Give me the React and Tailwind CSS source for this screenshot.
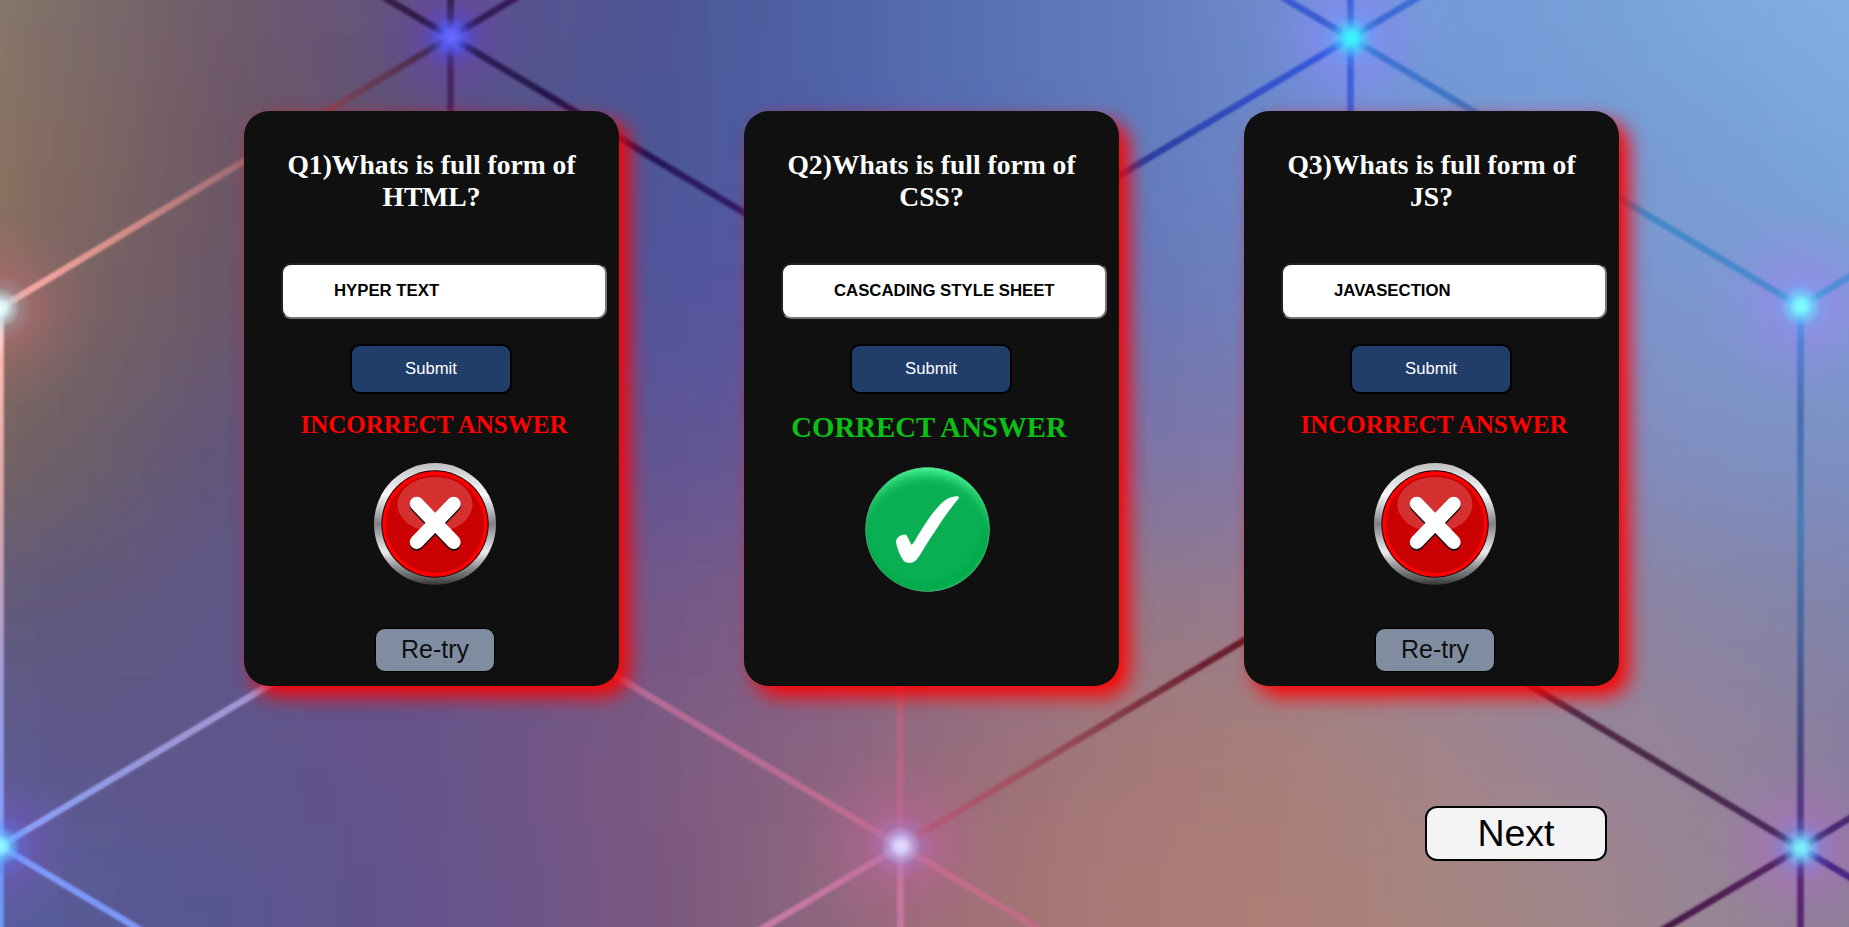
import React from "react";

const COLS = [-80, 70, 220, 370, 520, 670, 820, 970, 1120, 1270, 1420, 1570, 1720, 1870];
const ROWS = [
  ["#8d7f68", "#7d6c6c", "#6e5a6c", "#65527c", "#575390", "#4e5796", "#4f62a6", "#5770b4", "#607cbc", "#6e8ace", "#749cd8", "#779fd8", "#7ca9df", "#81afe5"],
  ["#937c5e", "#7e6862", "#6d5765", "#61506f", "#51538c", "#4e5698", "#5060a8", "#566eb2", "#607abc", "#6b88ca", "#7294d2", "#7699d4", "#799fd8", "#7ca7de"],
  ["#9a7260", "#7a6364", "#6a5768", "#605478", "#52559a", "#52559c", "#565ca4", "#5e6cb0", "#6876b6", "#7080bc", "#788cc6", "#7c93ca", "#7c98d0", "#7c9bd2"],
  ["#7c685c", "#6c5e66", "#61557a", "#605488", "#60538c", "#605494", "#685c98", "#7266a0", "#7a72a6", "#8078a8", "#8284b0", "#838ab8", "#7e90c2", "#7a90c6"],
  ["#645c78", "#60587c", "#5f5688", "#61548a", "#6c548a", "#755888", "#7c6088", "#88708e", "#917888", "#967c8e", "#8f8198", "#8e849e", "#8684a6", "#8084ac"],
  ["#5c5c94", "#5f588a", "#60558a", "#63528a", "#6e5486", "#7e5a80", "#8c6482", "#9a6e7c", "#a47878", "#a87e78", "#a48488", "#998496", "#92829a", "#867ca0"],
  ["#5860a2", "#585a96", "#585792", "#61538c", "#6d548a", "#7c587e", "#8e667e", "#a07074", "#aa7a76", "#ac7e76", "#a8857e", "#a0868a", "#968494", "#8a7c98"],
];

const LINES = [
  [450.5, 37, 0, -232, ["#2e1848", "#5c3856"]],
  [450.5, 37, 900, -232, ["#38205c", "#20103c"]],
  [450.5, 37, 450.5, -200, ["#3a2050", "#3a2050"]],
  [450.5, 37, 450.5, 577, ["#452560", "#5c2a5c"]],
  [450.5, 37, 0, 308, ["#3a2550", "#7a4456", "#a47078", "#d89088", "#ffb0ac"]],
  [450.5, 37, 900, 306, ["#302058", "#221548", "#30206c", "#302880"]],
  [1350.5, 38, 900, -232, ["#3a5cd4", "#3a50b4"]],
  [1350.5, 38, 1800, -232, ["#3b68d4", "#5090d0"]],
  [1350.5, 38, 1350.5, -200, ["#4462dc", "#4462c8"]],
  [1350.5, 38, 1350.5, 577, ["#4262e0", "#3848a0"]],
  [1350.5, 38, 900, 306, ["#3b60e8", "#283a98", "#282478"]],
  [1350.5, 38, 1800, 306, ["#4072d8", "#4178be", "#4288c8", "#5088d4"]],
  [1800.5, 306, 2250, 37, ["#5090d8", "#4c80c0"]],
  [1800.5, 306, 1800.5, 848, ["#5a88f0", "#476eb0", "#477cb8", "#48649c", "#464880", "#5a3088"]],
  [0, 846, 450, 577, ["#88a0ff", "#9898d8", "#a898d4", "#c09cd4"]],
  [0, 846, 450, 1115, ["#7c98fc", "#7898e4"]],
  [900.5, 846, 450, 577, ["#c06c90", "#b46c94", "#b070a4"]],
  [900.5, 846, 900.5, 306, ["#bc6890", "#a8606c", "#bc4050"]],
  [900.5, 846, 1350, 577, ["#bc5c7c", "#985058", "#6c2430", "#501020"]],
  [900.5, 846, 450, 1115, ["#c0709c", "#d890bc"]],
  [900.5, 846, 900.5, 1115, ["#c4709c", "#cc88a8"]],
  [900.5, 846, 1350, 1115, ["#c46c90", "#b07068"]],
  [1800.5, 848, 1350, 577, ["#4c2c60", "#4a2c48", "#582c48", "#701828"]],
  [1800.5, 848, 2250, 577, ["#482870", "#5c3878"]],
  [1800.5, 848, 2250, 1115, ["#482888", "#402060"]],
  [1800.5, 848, 1350, 1115, ["#582468", "#401830", "#401428"]],
  [1800.5, 848, 1800.5, 1115, ["#582878", "#582860"]],
];

const NODES = [
  { x: 451, y: 37, core: "#6868ff", mid: "#4058ff", halo: "#6a3cb4", r: 85 },
  { x: 1351, y: 38, core: "#3cf8ff", mid: "#50b8ff", halo: "#8888ff", r: 105 },
  { x: 1801, y: 306, core: "#80ffff", mid: "#60b8ff", halo: "#9c84f0", r: 100 },
  { x: 0, y: 308, core: "#e8ffff", mid: "#98c0c8", halo: "#b86870", r: 95 },
  { x: 0, y: 846, core: "#90ffff", mid: "#4888ff", halo: "#7854c8", r: 85 },
  { x: 901, y: 846, core: "#e4dcff", mid: "#a08ce8", halo: "#c0609c", r: 100 },
  { x: 1801, y: 848, core: "#80f4ff", mid: "#5898ff", halo: "#b06cc8", r: 95 },
];

function Backdrop() {
  return (
    <svg
      className="absolute inset-0 h-full w-full"
      viewBox="0 0 1849 927"
      preserveAspectRatio="xMidYMid slice"
      aria-hidden="true"
    >
      <defs>
        <filter id="soften" filterUnits="userSpaceOnUse" x="-300" y="-300" width="2500" height="1600">
          <feGaussianBlur stdDeviation="58" />
        </filter>
        <filter id="lineSoften" filterUnits="userSpaceOnUse" x="-50" y="-50" width="1950" height="1030">
          <feGaussianBlur stdDeviation="0.8" />
        </filter>
        {LINES.map(([x1, y1, x2, y2, stops], i) => (
          <linearGradient key={i} id={`line${i}`} gradientUnits="userSpaceOnUse" x1={x1} y1={y1} x2={x2} y2={y2}>
            {stops.map((c, j) => (
              <stop key={j} offset={j / (stops.length - 1)} stopColor={c} />
            ))}
          </linearGradient>
        ))}
        {NODES.map((n, i) => (
          <React.Fragment key={i}>
            <radialGradient id={`halo${i}`}>
              <stop offset="0" stopColor={n.halo} stopOpacity="0.75" />
              <stop offset="0.3" stopColor={n.halo} stopOpacity="0.5" />
              <stop offset="0.65" stopColor={n.halo} stopOpacity="0.16" />
              <stop offset="1" stopColor={n.halo} stopOpacity="0" />
            </radialGradient>
            <radialGradient id={`glow${i}`}>
              <stop offset="0" stopColor={n.mid} stopOpacity="0.9" />
              <stop offset="0.3" stopColor={n.mid} stopOpacity="0.65" />
              <stop offset="0.6" stopColor={n.mid} stopOpacity="0.25" />
              <stop offset="1" stopColor={n.mid} stopOpacity="0" />
            </radialGradient>
            <radialGradient id={`core${i}`}>
              <stop offset="0" stopColor={n.core} />
              <stop offset="0.3" stopColor={n.core} stopOpacity="0.8" />
              <stop offset="0.6" stopColor={n.core} stopOpacity="0.32" />
              <stop offset="1" stopColor={n.core} stopOpacity="0" />
            </radialGradient>
          </React.Fragment>
        ))}
        <linearGradient id="edge" gradientUnits="userSpaceOnUse" x1="0" y1="308" x2="0" y2="846">
          <stop offset="0" stopColor="#fff0f0" />
          <stop offset="0.1" stopColor="#ffb8b0" />
          <stop offset="0.35" stopColor="#dca8a4" />
          <stop offset="0.7" stopColor="#a09cdc" />
          <stop offset="1" stopColor="#80a0ff" />
        </linearGradient>
      </defs>
      <g filter="url(#soften)">
        {ROWS.map((row, r) =>
          row.map((c, i) => {
            const top = r === 0 ? -230 : -75 + r * 150;
            const left = i === 0 ? -230 : COLS[i] - 70;
            return (
              <rect
                key={`${r}-${i}`}
                x={left}
                y={top}
                width={i === 0 ? 232 : i === row.length - 1 ? 300 : 152}
                height={r === 0 ? 307 : r === ROWS.length - 1 ? 350 : 152}
                fill={c}
              />
            );
          })
        )}
      </g>
      {NODES.map((n, i) => (
        <circle key={i} cx={n.x} cy={n.y} r={n.r} fill={`url(#halo${i})`} />
      ))}
      <g filter="url(#lineSoften)">
        {LINES.map(([x1, y1, x2, y2], i) => (
          <path key={i} d={`M${x1} ${y1}L${x2} ${y2}`} stroke={`url(#line${i})`} strokeWidth="6.6" />
        ))}
        <path d="M0.5 308V846" stroke="url(#edge)" strokeWidth="6.6" />
        <path d="M0.5 846V940" stroke="#6c98f4" strokeWidth="6.6" />
      </g>
      {NODES.map((n, i) => (
        <g key={i}>
          <circle cx={n.x} cy={n.y} r="34" fill={`url(#glow${i})`} />
          <circle cx={n.x} cy={n.y} r="20" fill={`url(#core${i})`} />
        </g>
      ))}
    </svg>
  );
}

function WrongIcon({ id }) {
  return (
    <svg className="h-[122px] w-[122px]" viewBox="0 0 122 122" aria-hidden="true">
      <defs>
        <linearGradient id={id} x1="0" y1="0" x2="0" y2="1">
          <stop offset="0" stopColor="#bcbcbe" />
          <stop offset="0.06" stopColor="#d0d0d2" />
          <stop offset="0.26" stopColor="#f8f8fa" />
          <stop offset="0.4" stopColor="#b4b4b8" />
          <stop offset="0.5" stopColor="#828286" />
          <stop offset="0.6" stopColor="#b0b0b4" />
          <stop offset="0.73" stopColor="#ececee" />
          <stop offset="0.85" stopColor="#929294" />
          <stop offset="0.95" stopColor="#585a5a" />
          <stop offset="1" stopColor="#333" />
        </linearGradient>
      </defs>
      <circle cx="61" cy="61" r="61" fill={`url(#${id})`} />
      <circle cx="61" cy="61" r="53.7" fill="#100000" />
      <circle cx="61" cy="61" r="52.7" fill="#ff0000" />
      <circle cx="61" cy="61" r="49" fill="#cb0000" />
      <ellipse cx="61" cy="41.5" rx="37.5" ry="27.5" fill="#d43030" />
      <g strokeWidth="14" strokeLinecap="round">
        <path d="M42.7 42.7L79.7 81M79.7 42.7L42.7 81" stroke="#1c1010" />
        <path d="M42.7 40.7L79.7 79M79.7 40.7L42.7 79" stroke="#fff" />
      </g>
    </svg>
  );
}

function RightIcon() {
  return (
    <svg className="h-[125px] w-[125px]" viewBox="0 0 125 125" aria-hidden="true">
      <defs>
        <radialGradient id="topLight" gradientUnits="userSpaceOnUse" cx="61" cy="80" r="80">
          <stop offset="0.74" stopColor="#0aaf54" stopOpacity="0" />
          <stop offset="0.86" stopColor="#22cc6c" stopOpacity="0.6" />
          <stop offset="1" stopColor="#4bff9c" />
        </radialGradient>
        <radialGradient id="bottomLight" gradientUnits="userSpaceOnUse" cx="58" cy="56" r="72">
          <stop offset="0.75" stopColor="#00aa48" stopOpacity="0" />
          <stop offset="0.92" stopColor="#00ac48" />
          <stop offset="1" stopColor="#24c46c" />
        </radialGradient>
      </defs>
      <circle cx="62.5" cy="62.5" r="62" fill="#0aaf54" />
      <circle cx="62.5" cy="62.5" r="62" fill="url(#bottomLight)" />
      <circle cx="62.5" cy="62.5" r="62" fill="url(#topLight)" stroke="#6c9c80" strokeWidth="0.6" />
      <path
        d="M31 74.5C31.5 70 36 67.5 40.5 67.4C43 69 44.5 75 46.7 77.7C48.5 77 52 69.5 56.5 62.7C62 53.5 69 44 75 37.7C81 31.3 87 29.2 93.2 29.2Q94.3 30.2 93.6 31.6C88 38.5 82 46 77 53.5C70 64.5 64 73 59.5 80.5C55.5 87 52.5 92.5 49.7 94.2C46.5 96.6 41 96.6 38.5 93.6C35 88.5 31.5 80 31 74.5Z"
        fill="#fff"
      />
    </svg>
  );
}

function QuestionCard({ number, topic, answer, correct }) {
  return (
    <section className="flex h-[575px] w-[375px] flex-col items-center rounded-[25px] bg-[#101010] pt-[38px] shadow-[10px_10px_20px_red]">
      <h2 className="w-[325px] text-center font-['Liberation_Serif',serif] text-[27.6px] leading-[32px] font-bold text-white">
        Q{number})Whats is full form of {topic}?
      </h2>
      <input
        className="mt-[50px] ml-[25px] h-14 w-[326px] shrink-0 rounded-[10px] border-2 border-t-[#222] border-r-[#767676] border-b-[#767676] border-l-[#222] bg-white pr-[40px] pl-[51px] text-[16.75px] font-bold text-black"
        defaultValue={answer}
        aria-label={`Answer ${number}`}
      />
      <button className="mt-[25px] mr-px h-[50px] w-[162px] shrink-0 rounded-[10px] border-2 border-black bg-[#213e6b] pb-0.5 text-[16.67px] text-white">
        Submit
      </button>
      {correct ? (
        <>
          <p className="mt-[17px] mr-[5px] font-['Liberation_Serif',serif] text-[28.8px] leading-[33px] font-bold whitespace-nowrap text-[#0bbf15]">
            CORRECT ANSWER
          </p>
          <div className="mt-[23px] mr-[9px]">
            <RightIcon />
          </div>
        </>
      ) : (
        <>
          <p className="mt-[16px] ml-[5px] font-['Liberation_Serif',serif] text-[25px] leading-[29px] font-bold whitespace-nowrap text-[#ff0000]">
            INCORRECT ANSWER
          </p>
          <div className="mt-[24px] ml-[6px]">
            <WrongIcon id={`ring${number}`} />
          </div>
          <button className="mt-[43px] ml-[7px] h-11 w-[120px] shrink-0 rounded-[10px] border border-black bg-[#808da1] pb-0.5 text-[25px] leading-none text-[#101010]">
            Re-try
          </button>
        </>
      )}
    </section>
  );
}

export default function App() {
  return (
    <div className="relative h-screen overflow-hidden bg-[#6b5f8e] font-['Liberation_Sans',Arial,sans-serif]">
      <Backdrop />
      <main className="relative">
        <div className="flex gap-[125px] pt-[111px] pl-[244px]">
          <QuestionCard number={1} topic="HTML" answer="HYPER TEXT" />
          <QuestionCard number={2} topic="CSS" answer="CASCADING STYLE SHEET" correct />
          <QuestionCard number={3} topic="JS" answer="JAVASECTION" />
        </div>
        <div className="mt-[120px] flex justify-end pr-[242px]">
          <button className="h-[55px] w-[182px] rounded-[12px] border-2 border-black bg-[#f4f4f4] text-[37.5px] leading-none text-black">
            Next
          </button>
        </div>
      </main>
    </div>
  );
}
